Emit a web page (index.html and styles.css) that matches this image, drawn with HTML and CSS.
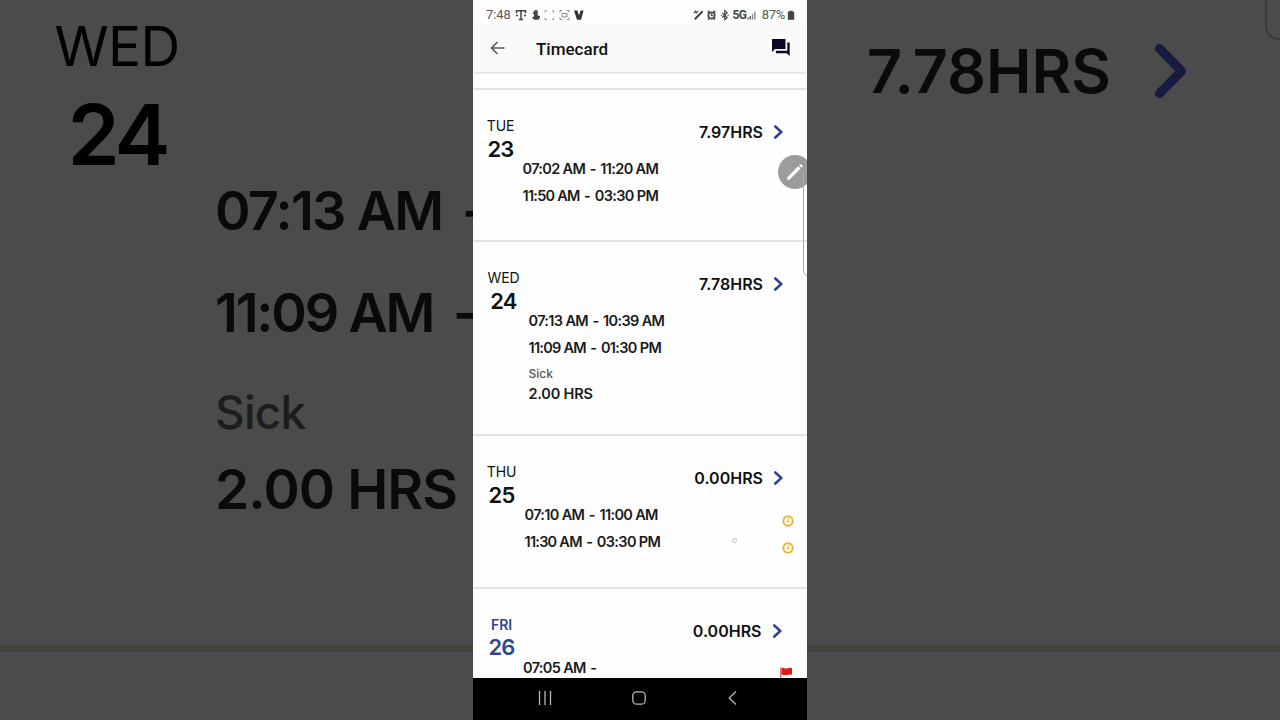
FILE: index.html
```html
<!DOCTYPE html>
<html lang="en">
<head>
<meta charset="utf-8">
<title>Timecard</title>
<link rel="stylesheet" href="styles.css">
</head>
<body>
<div class="stage">
  <div class="backdrop backdrop-left">
    <div class="big-day"><span class="big-name">WED</span><span class="big-num">24</span></div>
    <div class="big-body">
      <div class="big-time big-time-a"><span class="bt1">07:13 AM</span><span>-</span></div>
      <div class="big-time big-time-b"><span class="bt2">11:09 AM</span><span>-</span></div>
      <div class="big-sick">Sick</div>
      <div class="big-hrs">2.00 HRS</div>
    </div>
    <div class="big-line"></div>
  </div>

  <main class="phone">
    <header class="status">
      <span class="clock">7:48</span>
      <svg class="status-left" width="72" height="14" viewBox="0 0 72 14">
        <g fill="none" stroke="#444" stroke-width="1.3">
          <path d="M1.500 5.200V2.700h9v2.500M6 2.500v9M3.800 11.500h4.400" stroke-width="1.500"/>
          <path d="M1 7.500h2M9 7.500h2"/>
          <path d="M30 4.500V2.600h2M37 2.600h1.500v1.900M30 9.500v2h2M37 11.500h1.500v-2" stroke="#999" stroke-width="1"/>
          <path d="M45 4.500V2.600h2M52 2.600h2v1.900M45 9.500v2h2M52 11.500h2v-2M47 5.500h5v3.500h-5z" stroke="#888" stroke-width="1"/>
        </g>
        <path d="M19.500 2.200h3.200v5.300l2.300.5v1.500l-1.500 2.300h-4.500l-2-2.600 1.400-.6.600.6V6h-1.500z" fill="#444"/>
        <path d="M59 2.500h3.400l1.600 5 1.600-5h3L66 11.800h-4z" fill="#333"/>
      </svg>
      <span class="spring"></span>
      <svg class="status-right" width="40" height="14" viewBox="0 0 40 14">
        <g fill="none" stroke="#444" stroke-width="1.300">
          <path d="M1.800 11.200 9.600 3.200" stroke-width="2"/>
          <path d="M.8 5.200 2.500 3.300l.8 1.600 1.700-2" stroke-width="1.100"/>
          <g transform="translate(3 0)">
            <circle cx="15.500" cy="7.500" r="3.200" stroke-width="1.700"/>
            <path d="M15.500 5.500v2.200h1.600M11.500 4.500l2-1.800M19.500 4.500l-2-1.800M13 10.500l-1 1.200M18 10.500l1 1.200"/>
            <path d="m26.200 4.800 5 4.700-2.500 2.200V2.500l2.500 2.200-5 4.800M24.800 7.200h1.400M31.400 7.200h1.400" stroke-width="1.100"/>
          </g>
        </g>
      </svg>
      <span class="fiveg">5G</span>
      <svg class="bars" width="10" height="10" viewBox="0 0 10 10">
        <path d="M.5 7.500h1.300V9.500H.5zM2.700 6H4v3.500H2.700z" fill="#555"/><path d="M4.900 3.800h1.300v5.700H4.900zM7.100 1.500h1.400v8H7.100z" fill="#888"/>
      </svg>
      <span class="pct">87%</span>
      <svg class="battery" width="8" height="10" viewBox="0 0 8 10"><path d="M2.300.8h3.400v1h1.500v8H.8v-8h1.500z" fill="#444"/></svg>
    </header>
    <nav class="appbar">
      <svg class="back" width="16" height="14" viewBox="0 0 16 14"><path d="M14.500 7H1.800M7.500 1 1.500 7l6 6" fill="none" stroke="#555" stroke-width="1.500"/></svg>
      <h1 class="title">Timecard</h1>
      <svg class="chat" width="18" height="18" viewBox="0 0 18 18"><path d="M0 0h13.500v10H3L0 13z" fill="#090628"/><path d="M15.300 3.500h2.400V17l-3-2.800H4v-2.400h11.300z" fill="#090628"/></svg>
    </nav>

    <div class="list">
      <section class="row r1">
        <div class="day"><span class="name">TUE</span><span class="num">23</span></div>
        <div class="body">
          <div class="hours"><span>7.97HRS</span><svg class="chev" width="10" height="14" viewBox="0 0 10 14"><path d="M1.300 1.500 7.300 7l-6 5.500" /></svg></div>
          <div class="time"><span class="t1">07:02 AM</span><span class="dash">-</span><span>11:20 AM</span></div>
          <div class="time"><span class="t2">11:50 AM</span><span class="dash">-</span><span>03:30 PM</span></div>
        </div>
      </section>
      <section class="row r2">
        <div class="day"><span class="name">WED</span><span class="num">24</span></div>
        <div class="body">
          <div class="hours"><span>7.78HRS</span><svg class="chev" width="10" height="14" viewBox="0 0 10 14"><path d="M1.300 1.500 7.300 7l-6 5.500" /></svg></div>
          <div class="time"><span class="t1">07:13 AM</span><span class="dash">-</span><span>10:39 AM</span></div>
          <div class="time"><span class="t2">11:09 AM</span><span class="dash">-</span><span>01:30 PM</span></div>
          <div class="sick">Sick</div>
          <div class="sick-hrs">2.00 HRS</div>
        </div>
      </section>
      <section class="row r3">
        <div class="day"><span class="name">THU</span><span class="num">25</span></div>
        <div class="body">
          <div class="hours"><span>0.00HRS</span><svg class="chev" width="10" height="14" viewBox="0 0 10 14"><path d="M1.300 1.500 7.300 7l-6 5.500" /></svg></div>
          <div class="time"><span class="t1">07:10 AM</span><span class="dash">-</span><span>11:00 AM</span><svg class="mark" width="12" height="12" viewBox="0 0 12 12"><circle cx="6" cy="6" r="4.700"/><path d="M6.500 3.500v3H4.300"/></svg></div>
          <div class="time"><span class="t2">11:30 AM</span><span class="dash">-</span><span>03:30 PM</span><svg class="mark" width="12" height="12" viewBox="0 0 12 12"><circle cx="6" cy="6" r="4.700"/><path d="M6.500 3.500v3H4.300"/></svg></div>
        </div>
      </section>
      <section class="row r4">
        <div class="day today"><span class="name">FRI</span><span class="num">26</span></div>
        <div class="body">
          <div class="hours"><span>0.00HRS</span><svg class="chev" width="10" height="14" viewBox="0 0 10 14"><path d="M1.300 1.500 7.300 7l-6 5.500" /></svg></div>
          <div class="time"><span class="t1">07:05 AM</span><span class="dash">-</span><svg class="flag" width="13" height="14" viewBox="0 0 13 14"><path d="M.3.500h1v13h-1z" fill="#c33"/><path d="M1.500 1.200c2-1.200 3.500 1 5.500.3 2-.8 3-.8 5-.3v6.600c-2-.7-3.500-.2-5 .3-2 .5-3.500-1-5.500-.2z" fill="#e01b1b"/></svg></div>
        </div>
      </section>
    </div>

    <footer class="navbar">
      <svg width="14" height="14" viewBox="0 0 14 14"><path d="M1.500 0v14M7 0v14M12.500 0v14"/></svg>
      <svg class="home" width="14" height="14" viewBox="0 0 14 14"><rect x=".8" y=".8" width="12.400" height="12.400" rx="3.800"/></svg>
      <svg width="9" height="14" viewBox="0 0 9 14"><path d="M8 .5 1.200 7 8 13.500"/></svg>
    </footer>

    <div class="pen"><svg width="20" height="20" viewBox="0 0 20 20"><path d="M1.800 18.200l1.200-3.600L13.200 4.200l2.400 2.400L5.200 17z" fill="#fff"/><path d="m14.100 3.300 1.400-1.400 2.500 2.400-1.500 1.500z" fill="#fff"/></svg></div>
    <div class="edge-handle"></div>
    <div class="touch-dot"></div>
  </main>

  <div class="backdrop backdrop-right">
    <div class="big-total"><span>7.78HRS</span><svg width="34" height="56" viewBox="0 0 34 56"><path d="M5.500 5.500l22 22.500-22 22.500" fill="none" stroke="#161b42" stroke-width="9" stroke-linecap="round" stroke-linejoin="round"/></svg></div>
    <div class="big-line"></div>
    <div class="big-handle"></div>
  </div>
</div>
</body>
</html>
```
FILE: styles.css
```css
* { box-sizing: border-box; }
body { margin: 0; background: #4b4b4b; font-family: Inter, "Liberation Sans", sans-serif; }
svg { display: block; flex: none; }
.stage { display: flex; width: 1280px; height: 720px; overflow: hidden; }
span, .sick, .sick-hrs, .big-sick, .big-hrs { white-space: pre; }

/* Dimmed enlargement behind the phone */
.backdrop { background: #4b4b4b; color: #0a0a09; overflow: hidden; flex: none; height: 720px; display: flex; flex-direction: column; }
.backdrop-left { width: 473px; }
.backdrop-right { width: 473px; position: relative; }
.big-day { display: flex; flex-direction: column; align-items: center; width: 124px; margin-left: 55px; color: #000; }
.big-name { font-size: 55px; line-height: 92px; letter-spacing: -.6px; }
.big-num { font-size: 84px; line-height: 85px; font-weight: 600; letter-spacing: -4px; }
.big-body { padding-left: 215px; font-weight: 600; }
.big-time { font-size: 54px; display: flex; }
.big-time span { flex: none; }
.big-time-a { line-height: 68px; letter-spacing: -1.700px; }
.big-time-b { line-height: 135px; letter-spacing: -2.200px; }
.bt1 { width: 247px; }
.bt2 { width: 238px; }
.big-sick { font-size: 46px; line-height: 64px; font-weight: 500; letter-spacing: -.8px; color: #1d1d1d; }
.big-hrs { font-size: 55px; line-height: 91px; letter-spacing: -.9px; }
.big-line { height: 7px; background: #44443f; flex: none; margin-top: auto; margin-bottom: 68px; }
.big-total { display: flex; align-items: center; justify-content: space-between; padding: 0 92px 0 60px; height: 141px; font-size: 61px; font-weight: 600; }
.big-handle { position: absolute; left: 458px; top: -60px; width: 40px; height: 100px; border: 2px solid #393939; border-radius: 14px; }

/* Phone */
.phone { width: 334px; height: 720px; flex: none; position: relative; overflow: hidden; background: #fefefe; display: flex; flex-direction: column; }
.status { height: 24px; padding: 5px 12px 0 13px; display: flex; align-items: center; font-family: Roboto, sans-serif; font-size: 12px; color: #555; flex: none; }
.clock { width: 26px; font-size: 12.800px; }
.status-left { margin-left: 3px; }
.spring { flex: 1; }
.fiveg { font-weight: 700; font-size: 12px; color: #444; letter-spacing: -.7px; }
.bars { margin-left: 1px; }
.pct { margin-left: 4.500px; font-size: 13px; letter-spacing: -.3px; }
.battery { margin-left: 2px; }
.appbar { height: 48px; background: #fafafa; display: flex; align-items: center; padding: 0 17px; box-shadow: 0 1px 2px rgba(0,0,0,.16); flex: none; }
.title { margin: 1px 0 0 30px; font: 500 17px/20px Roboto, sans-serif; color: #111; flex: 1; }
.list { flex: 1; min-height: 0; overflow: hidden; padding-top: 16px; }
.row { border-top: 2px solid #e3e2dd; height: 152px; padding: 26px 14px 0; display: flex; }
.r2 { height: 194px; }
.r3 { height: 153px; }
.day { display: flex; flex-direction: column; align-items: center; width: 27px; flex: none; color: #111; }
.r2 .day { width: 33px; }
.r3 .day, .r4 .day { width: 29px; }
.name { font-size: 14px; line-height: 20px; letter-spacing: -.1px; }
.num { font-size: 22px; line-height: 26px; font-weight: 600; letter-spacing: -.8px; }
.day.today { color: #32458f; }
.today .name { font-weight: 600; line-height: 19px; }
.body { flex: 1; padding: 6px 0 0 8.500px; font-weight: 600; color: #1a1a1a; }
.r4 .body { padding-left: 7px; }
.hours { height: 20px; margin-bottom: 13px; display: flex; align-items: center; justify-content: flex-end; gap: 11px; padding-right: 9px; font-size: 16px; color: #111; }
.r4 .hours { padding-right: 10.500px; }
.chev path { fill: none; stroke: #32458f; stroke-width: 2.600; stroke-linecap: round; stroke-linejoin: round; }
.time { height: 27px; line-height: 27px; font-size: 14.500px; letter-spacing: -.65px; display: flex; }
.t2 { letter-spacing: -.75px; }
.dash { margin: 0 4.600px 0 4.400px; }
.sick { font-size: 12px; line-height: 25px; font-weight: 500; color: #555; }
.sick-hrs { font-size: 14.500px; line-height: 16px; letter-spacing: -.2px; }
.mark { margin: 13.500px -.7px 0 auto; fill: none; stroke: #eab53a; stroke-width: 2; }
.mark path { stroke-width: 1.200; }
.flag { margin: 13px 0 0 auto; }
.navbar { height: 42px; background: #000; display: flex; justify-content: space-between; align-items: center; padding: 0 70px 2px 65px; flex: none; }
.navbar svg { fill: none; stroke: #b8b8b8; stroke-width: 1.300; }
.navbar .home { margin-right: 2px; }

.pen { position: absolute; left: 305px; top: 155px; width: 34px; height: 34px; border-radius: 50%; background: #9c9c9c; display: grid; place-items: center; }
.edge-handle { position: absolute; left: 330px; top: 169px; width: 10px; height: 107px; border: 1px solid #aaa; border-radius: 5px; }
.touch-dot { position: absolute; left: 259px; top: 538px; width: 5px; height: 5px; border: 1px solid #bbb; border-radius: 50%; }
```
